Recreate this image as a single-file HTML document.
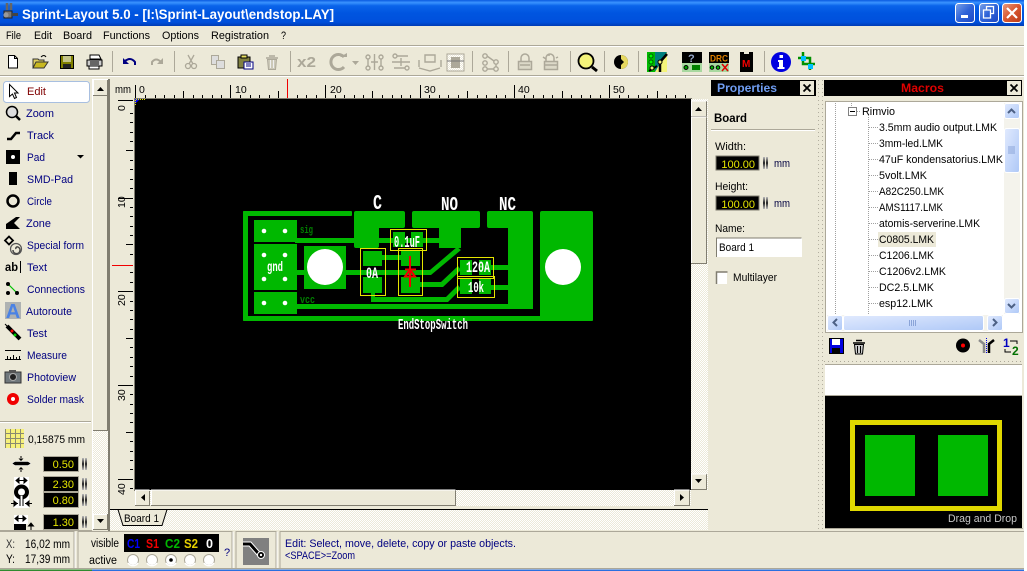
<!DOCTYPE html>
<html><head><meta charset="utf-8"><title>Sprint-Layout 5.0</title>
<style>
html,body{margin:0;padding:0;background:#fff;width:1027px;height:571px;overflow:hidden}
svg{display:block;font-family:"Liberation Sans",sans-serif;font-size:11px}
.n{fill:#000080}.k{fill:#000}.y{fill:#e6e600;text-anchor:end}
.g{fill:#aca899}.gs{stroke:#aca899;fill:none}
.s{fill:#fff;font-family:"Liberation Mono",monospace;font-weight:bold;font-size:12px}
.d{fill:#008000;font-family:"Liberation Mono",monospace;font-weight:bold;font-size:11px}
</style></head><body>
<svg width="1027" height="571" viewBox="0 0 1027 571">
<defs>
<pattern id="dith" width="2" height="2" patternUnits="userSpaceOnUse"><rect width="2" height="2" fill="#ece9d8"/><rect width="1" height="1" fill="#fff"/><rect x="1" y="1" width="1" height="1" fill="#fff"/></pattern>
<linearGradient id="tb" x1="0" y1="0" x2="0" y2="1"><stop offset="0" stop-color="#0a5ae0"/><stop offset=".1" stop-color="#3a93ff"/><stop offset=".22" stop-color="#0a64ea"/><stop offset=".5" stop-color="#0055e0"/><stop offset=".85" stop-color="#0050dc"/><stop offset="1" stop-color="#003cb4"/></linearGradient>
<linearGradient id="bb" x1="0" y1="0" x2="1" y2="1"><stop offset="0" stop-color="#7ba2e8"/><stop offset=".5" stop-color="#2f63d8"/><stop offset="1" stop-color="#1c47c4"/></linearGradient>
<linearGradient id="rb" x1="0" y1="0" x2="1" y2="1"><stop offset="0" stop-color="#e89b80"/><stop offset=".5" stop-color="#d8562f"/><stop offset="1" stop-color="#b83a18"/></linearGradient>
<linearGradient id="sb" x1="0" y1="0" x2="1" y2="1"><stop offset="0" stop-color="#e1eafe"/><stop offset="1" stop-color="#aec8f7"/></linearGradient>
<linearGradient id="spin" x1="0" y1="0" x2="0" y2="1"><stop offset="0" stop-color="#bbb"/><stop offset=".5" stop-color="#222"/><stop offset="1" stop-color="#bbb"/></linearGradient>
<g id="sp"><rect x="0" y="0" width="2" height="12" fill="url(#spin)"/><rect x="3" y="0" width="2" height="12" fill="url(#spin)"/></g>
<g id="radio"><circle r="5.5" fill="#fff" stroke="#aca899"/><path d="M-5 3A6 6 0 0 0 5 3" fill="none" stroke="#fff" stroke-width="1.500"/></g>
</defs>

<!-- window -->
<rect x="0" y="0" width="1024" height="571" fill="#ece9d8"/>
<rect x="0" y="0" width="1024" height="26" fill="url(#tb)"/>
<!-- app icon -->
<path d="M7 3v7M11 3v7" stroke="#666" stroke-width="2.500"/><rect x="4" y="11" width="8" height="7" fill="#777" stroke="#222"/><rect x="12" y="13" width="6" height="3" fill="#444"/><circle cx="6" cy="15" r="2.500" fill="#999"/>
<text x="22" y="19" fill="#fff" font-weight="bold" font-size="14" textLength="312" lengthAdjust="spacingAndGlyphs">Sprint-Layout 5.0 - [I:\Sprint-Layout\endstop.LAY]</text>
<!-- title buttons -->
<rect x="955.500" y="3.500" width="19" height="19" rx="3" fill="url(#bb)" stroke="#fff"/><rect x="961" y="15" width="7" height="3" fill="#fff"/>
<rect x="979.500" y="3.500" width="19" height="19" rx="3" fill="url(#bb)" stroke="#fff"/><path d="M986.500 9.500v-3h7v7h-3M983.500 10h7v8h-7z" fill="none" stroke="#fff" stroke-width="1.300"/>
<rect x="1002.500" y="3.500" width="19" height="19" rx="3" fill="url(#rb)" stroke="#fff"/><path d="M1007 8l10 10M1017 8l-10 10" stroke="#fff" stroke-width="2.200"/>

<!-- menu -->
<g class="k">
<text x="6" y="39" textLength="15" lengthAdjust="spacingAndGlyphs">File</text><text x="34" y="39" textLength="18" lengthAdjust="spacingAndGlyphs">Edit</text><text x="63" y="39" textLength="29" lengthAdjust="spacingAndGlyphs">Board</text><text x="103" y="39" textLength="47" lengthAdjust="spacingAndGlyphs">Functions</text><text x="162" y="39" textLength="37" lengthAdjust="spacingAndGlyphs">Options</text><text x="211" y="39" textLength="58" lengthAdjust="spacingAndGlyphs">Registration</text><text x="281" y="39" textLength="5" lengthAdjust="spacingAndGlyphs">?</text>
</g>
<path d="M0 45.500H1024" stroke="#aca899"/><path d="M0 46.500H1024" stroke="#fff"/>
<path d="M0 75.500H1024" stroke="#aca899"/><path d="M0 76.500H1024" stroke="#fff"/>

<!-- toolbar separators -->
<g stroke="#aca899"><path d="M112.500 51v21M174.500 51v21M290.500 51v21M472.500 51v21M508.500 51v21M570.500 51v21M604.500 51v21M638.500 51v21M764.500 51v21"/></g>
<!-- new -->
<path d="M8.500 55.500h6l3 3v9.500h-9z" fill="#fff" stroke="#000"/><path d="M14.500 55.500v3h3" fill="none" stroke="#000"/>
<!-- open -->
<path d="M33 68V59h5l1 1h5v2" fill="#e0d060" stroke="#333"/><path d="M33 68l3-6h12l-4 6z" fill="#c8b820" stroke="#333"/><path d="M41 57q3-3 5 0" fill="none" stroke="#000"/>
<!-- save -->
<rect x="60.500" y="55.500" width="13" height="13" fill="#808000" stroke="#000"/><rect x="63" y="56" width="8" height="6" fill="#c4c48a"/><rect x="63" y="64" width="8" height="4" fill="#222"/>
<!-- print -->
<path d="M90 55h9l2 4H90z" fill="#fff" stroke="#000"/><path d="M87 60h15v6H87z" fill="#ccc" stroke="#000"/><path d="M89 66h10v3H89z" fill="#fff" stroke="#000"/><path d="M90 62h9M90 64h9" stroke="#000"/>
<!-- undo/redo -->
<path d="M124 62q6-6 11 0v3" fill="none" stroke="#000080" stroke-width="2"/><path d="M123 58v6h6z" fill="#000080"/>
<path d="M161 62q-5-5-9 0v3" fill="none" stroke="#aca899" stroke-width="2"/><path d="M163 58v6h-6z" fill="#aca899"/>
<!-- cut -->
<g class="gs" stroke-width="1.300"><path d="M188 55l5 9M194 55l-5 9"/><circle cx="188" cy="66" r="2.500"/><circle cx="194" cy="66" r="2.500"/></g>
<!-- copy -->
<g fill="#ddd" stroke="#aca899"><path d="M211.500 55.500h7v9h-7z"/><path d="M216.500 60.500h8v8h-8z"/></g>
<!-- paste -->
<rect x="238" y="57" width="12" height="11" fill="#808040" stroke="#000"/><rect x="241" y="55" width="6" height="3" fill="#e8e060" stroke="#000"/><rect x="244" y="62" width="9" height="7" fill="#fff" stroke="#000080"/><path d="M246 64h5M246 66h5" stroke="#000080"/>
<!-- trash -->
<path d="M266 58h12M269 56h6" stroke="#aca899" stroke-width="1.500"/><path d="M267.500 59.500h9l-1 10h-7z" fill="#ccc9b8" stroke="#aca899"/><path d="M270.500 60v8M273.500 60v8" stroke="#eee"/>
<!-- x2 -->
<text x="297" y="67" class="g" font-weight="bold" font-size="15" textLength="19" lengthAdjust="spacingAndGlyphs">x2</text>
<!-- rotate -->
<path d="M344 57A7.500 7.500 0 1 0 344 67" fill="none" stroke="#aca899" stroke-width="3"/><path d="M340 57h7v-4z" fill="#aca899"/>
<path d="M352 61h7l-3.500 4z" fill="#aca899"/>
<!-- align etc -->
<g class="gs" stroke-width="1.400">
<circle cx="368" cy="57" r="2"/><circle cx="368" cy="68" r="2"/><circle cx="381" cy="57" r="2"/><circle cx="381" cy="68" r="2"/><path d="M368 59v7M381 59v7M371 62h7M374.500 54v16"/>
<circle cx="395" cy="56" r="2"/><circle cx="407" cy="68" r="2"/><path d="M397 56h11M392 62h18M394 68h11M401 58v8"/>
<path d="M425 55h10v7h-10zM419 60v7M441 60v7M419 68l11 3 10-3"/>
</g>
<rect x="447" y="54" width="17" height="17" fill="url(#dith)" stroke="#aca899"/><rect x="451" y="57" width="9" height="11" fill="#aca899"/><path d="M447 61h17" stroke="#777"/>
<g class="gs" stroke-width="1.400"><circle cx="485" cy="56" r="2.200"/><circle cx="485" cy="63" r="2.200"/><circle cx="485" cy="69" r="2.200"/><circle cx="496" cy="62" r="2.200"/><circle cx="496" cy="69" r="2.200"/><path d="M487 56l7 5M487 69h7M496 64v3"/></g>
<!-- locks -->
<g class="gs" stroke-width="1.500"><path d="M521 61v-3a4 4 0 0 1 8 0v3"/><rect x="518.500" y="61.500" width="13" height="8" fill="#dcd9c8"/><path d="M520 65h10"/><path d="M546 61v-3a4 4 0 0 1 8 0v3"/><rect x="544.500" y="61.500" width="13" height="8" fill="#dcd9c8"/><path d="M545 65h12M543 57l3 2M549 54v2M558 57l-2 1"/></g>
<!-- magnifier -->
<circle cx="586" cy="61" r="7.500" fill="#f4f47a" stroke="#000" stroke-width="1.800"/><path d="M592 67l5 4" stroke="#000" stroke-width="3"/>
<!-- half-moon -->
<circle cx="621" cy="62" r="7" fill="#000"/><path d="M621 55a7 7 0 0 1 0 14l0-4 3-3-3-3z" fill="#e6d860"/>
<!-- wizard -->
<rect x="647" y="52" width="20" height="20" fill="#007f7f"/><path d="M647 72V52h8v20z" fill="#00b800"/><path d="M667 52v20h-12z" fill="#f4f47a"/><circle cx="651" cy="56" r="2" fill="#0f0" stroke="#006000"/><circle cx="651" cy="62" r="2" fill="#0f0" stroke="#006000"/><path d="M667 54l-7 8v10" stroke="#000" stroke-width="2.500" fill="none"/><circle cx="660" cy="62" r="2" fill="#f4f47a" stroke="#000"/><path d="M649 71l8-5" stroke="#000" stroke-width="2"/><circle cx="652" cy="68" r="2" fill="#f4f47a" stroke="#000"/>
<!-- help -->
<rect x="682" y="52" width="20" height="11" fill="#000"/><rect x="682" y="63" width="20" height="9" fill="#a8d8a0"/><text x="688" y="62" fill="#9ac" font-weight="bold" font-size="11">?</text><circle cx="686" cy="67.500" r="2" fill="#00a000" stroke="#000"/><rect x="692" y="65" width="8" height="5" fill="#008000"/>
<!-- DRC -->
<rect x="709" y="52" width="20" height="11" fill="#000"/><rect x="709" y="63" width="20" height="9" fill="#a8d8a0"/><text x="710" y="61.500" fill="#e08000" font-weight="bold" font-size="9" textLength="18" lengthAdjust="spacingAndGlyphs">DRC</text><circle cx="712" cy="67.500" r="1.800" fill="#00c000" stroke="#000"/><circle cx="718" cy="67.500" r="1.800" fill="#00c000" stroke="#000"/><path d="M722 64l6 7M728 64l-6 7" stroke="#e00000" stroke-width="1.500"/>
<!-- M -->
<path d="M740 52h4v2h5v-2h4v20h-13z" fill="#000"/><text x="742" y="67" fill="#f00000" font-weight="bold" font-size="10">M</text>
<!-- info -->
<circle cx="781" cy="62" r="10" fill="#0000e0"/><rect x="779.500" y="55" width="3.500" height="3" fill="#fff"/><path d="M778 60h5v7h1.500v2h-7v-2h1.500v-5h-1z" fill="#fff"/>
<!-- crop -->
<path d="M803 52v12h12M798 58h12v12" fill="none" stroke="#009000" stroke-width="2.500"/><rect x="801" y="56" width="5" height="5" fill="#00c0ff"/><rect x="808" y="64" width="5" height="5" fill="#00c0ff"/>

<!-- left panel -->
<rect x="3.500" y="81.500" width="86" height="21" rx="3" fill="#fff" stroke="#a8bfe0"/>
<path d="M9.500 84.500v12l3-2.500 2 4.500 2-1-2-4.500h3.500z" fill="#fff" stroke="#000"/>
<text x="27" y="95" fill="#800000" textLength="19" lengthAdjust="spacingAndGlyphs">Edit</text>
<g class="n">
<text x="26" y="117" textLength="28" lengthAdjust="spacingAndGlyphs">Zoom</text><text x="27" y="139" textLength="27" lengthAdjust="spacingAndGlyphs">Track</text><text x="27" y="161" textLength="18" lengthAdjust="spacingAndGlyphs">Pad</text><text x="27" y="183" textLength="46" lengthAdjust="spacingAndGlyphs">SMD-Pad</text><text x="27" y="205" textLength="25" lengthAdjust="spacingAndGlyphs">Circle</text><text x="26" y="227" textLength="25" lengthAdjust="spacingAndGlyphs">Zone</text><text x="27" y="249" textLength="57" lengthAdjust="spacingAndGlyphs">Special form</text><text x="27" y="271" textLength="20" lengthAdjust="spacingAndGlyphs">Text</text><text x="27" y="293" textLength="58" lengthAdjust="spacingAndGlyphs">Connections</text><text x="26" y="315" textLength="46" lengthAdjust="spacingAndGlyphs">Autoroute</text><text x="27" y="337" textLength="20" lengthAdjust="spacingAndGlyphs">Test</text><text x="27" y="359" textLength="40" lengthAdjust="spacingAndGlyphs">Measure</text><text x="27" y="381" textLength="49" lengthAdjust="spacingAndGlyphs">Photoview</text><text x="27" y="403" textLength="57" lengthAdjust="spacingAndGlyphs">Solder mask</text>
</g>
<circle cx="12" cy="112" r="5.500" fill="#ddd" stroke="#000" stroke-width="1.500"/><path d="M16 116l4 4" stroke="#000" stroke-width="2.500"/>
<path d="M7 139h4l5-6h4" fill="none" stroke="#000" stroke-width="2.500"/>
<rect x="6" y="150" width="14" height="14" fill="#000"/><circle cx="13" cy="157" r="2" fill="#fff"/><path d="M77 155h7l-3.500 3.500z" fill="#000"/>
<rect x="9" y="172" width="8" height="13" fill="#000"/>
<circle cx="13" cy="201" r="5.500" fill="none" stroke="#000" stroke-width="2.500"/>
<path d="M6 229v-5l10-7h4l-6 6 6 6z" fill="#000"/>
<path d="M9 236.500l4 4-4 4-4-4z" fill="none" stroke="#000" stroke-width="1.800"/><path d="M16 249a1.500 1.500 0 0 1 2-2 3.500 3.500 0 1 1-5 3" fill="none" stroke="#444" stroke-width="1.500"/><circle cx="16" cy="249" r="5.500" fill="none" stroke="#555" stroke-width="1.200"/>
<text x="5" y="271" font-weight="bold" font-size="12" class="k" textLength="13" lengthAdjust="spacingAndGlyphs">ab</text><path d="M20.500 261v12" stroke="#000"/>
<path d="M8 284l9 9" stroke="#00c000" stroke-width="1.200"/><circle cx="8" cy="284" r="2" fill="#000"/><circle cx="8" cy="293" r="2" fill="#000"/><circle cx="17" cy="293" r="2" fill="#000"/>
<rect x="5" y="302" width="16" height="17" fill="#aeb2b2"/><text x="13" y="318" text-anchor="middle" font-weight="bold" font-size="20" fill="#4a82e4">A</text>
<path d="M7 326l13 13" stroke="#000" stroke-width="4"/><path d="M5 324l3 3" stroke="#000"/><circle cx="12" cy="331" r="1.500" fill="#f00"/><circle cx="15" cy="335" r="1.500" fill="#0c0"/>
<path d="M5 350.500h16" stroke="#000"/><path d="M5 359.500h16M7.500 356v3M10.500 357v2M13.500 355v4M16.500 357v2M19.500 356v3" stroke="#000" fill="none"/>
<rect x="5" y="372" width="16" height="11" fill="#70787c" stroke="#333"/><rect x="9" y="370" width="7" height="3" fill="#555"/><circle cx="13" cy="377" r="3.500" fill="#222" stroke="#aaa"/>
<circle cx="13" cy="399" r="6" fill="#f00000"/><circle cx="13" cy="399" r="2" fill="#fff"/>

<!-- left scrollbar -->
<rect x="92" y="79" width="17" height="451" fill="url(#dith)"/>
<path d="M92.500 79v451" stroke="#fff"/>
<rect x="93" y="80" width="15" height="15" fill="#ece9d8"/><path d="M93.500 95V79.500H108" fill="none" stroke="#fff"/><path d="M107.500 80v15.500H93" fill="none" stroke="#807d70"/>
<path d="M97 91h7l-3.500-4z" fill="#000"/>
<rect x="93" y="96" width="15" height="334" fill="#ece9d8"/><path d="M107.500 96v334.500H93" fill="none" stroke="#807d70"/>
<rect x="93" y="514" width="15" height="15" fill="#ece9d8"/><path d="M107.500 514v15.500H93" fill="none" stroke="#807d70"/><path d="M93.500 529V514.500H107" fill="none" stroke="#fff"/><path d="M97 519h7l-3.500 4z" fill="#000"/>
<path d="M109 79v452" stroke="#807d70" stroke-width="2"/>

<!-- grid etc -->
<path d="M0 421.500H91" stroke="#aca899"/><path d="M0 422.500H91" stroke="#fff"/>
<rect x="5" y="429" width="19" height="19" fill="#f6f07a"/>
<path d="M5.500 429v19M10.500 429v19M15.500 429v19M20.500 429v19M5 433.500h19M5 438.500h19M5 443.500h19" stroke="#8a8a70"/>
<text x="28" y="443" class="k" textLength="57" lengthAdjust="spacingAndGlyphs">0,15875 mm</text>
<g fill="#000" stroke="#aca899">
<rect x="43.500" y="456.500" width="35" height="15"/><rect x="43.500" y="476.500" width="35" height="15"/><rect x="43.500" y="492.500" width="35" height="15"/><rect x="43.500" y="514.500" width="35" height="15"/></g>
<g class="y" font-size="11"><text x="74" y="468">0.50</text><text x="74" y="488">2.30</text><text x="74" y="504">0.80</text><text x="74" y="526">1.30</text></g>
<use href="#sp" x="82" y="458"/><use href="#sp" x="82" y="478"/><use href="#sp" x="82" y="494"/><use href="#sp" x="82" y="516"/>
<!-- width icons -->
<path d="M12 463.500l3-2h13l3 2-3 2H15z" fill="#000" stroke="#fff" stroke-width=".5"/>
<path d="M18.500 458.500h5l-2.500 2.500zM18.500 469.500h5l-2.500-2.500z" fill="#000"/><path d="M21 456v2M21 470v2" stroke="#000"/>
<rect x="14" y="477" width="15" height="31" fill="#fff"/>
<path d="M16 480.500h11M16 480.500l3-2.500v5zM27 480.500l-3-2.500v5z" fill="#000" stroke="#000"/>
<circle cx="21.500" cy="492" r="5.500" fill="#fff" stroke="#000" stroke-width="4"/>
<path d="M20 497v9M23 497v9" stroke="#000"/><rect x="20.500" y="496" width="2" height="11" fill="#fff"/>
<path d="M11 503.500h7M14 501l3 2.500-3 2.500zM32 503.500h-7M29 501l-3 2.500 3 2.500z" fill="#000" stroke="#000"/>
<rect x="14" y="515" width="14" height="9" fill="#fff"/>
<path d="M15 518.500h11M15 518.500l3-2.500v5zM26 518.500l-3-2.500v5z" fill="#000" stroke="#000"/>
<rect x="14" y="524" width="12" height="6" fill="#000"/>
<path d="M31 530v-5M28.500 526l2.500-3 2.500 3z" fill="#000" stroke="#000"/>

<!-- rulers -->
<text x="115" y="93" class="k" textLength="16" lengthAdjust="spacingAndGlyphs">mm</text>
<path d="M118 100.500h15" stroke="#000"/>
<path d="M135.500 85v13" stroke="#000"/>
<path d="M145.500 95v3M155.500 95v3M164.500 95v3M174.500 95v3M183.500 91v7M193.500 95v3M202.500 95v3M212.500 95v3M221.500 95v3M230.500 85v13M240.500 95v3M250.500 95v3M259.500 95v3M269.500 95v3M278.500 91v7M297.500 95v3M306.500 95v3M316.500 95v3M325.500 85v13M335.500 95v3M344.500 95v3M354.500 95v3M363.500 95v3M372.500 91v7M382.500 95v3M392.500 95v3M401.500 95v3M410.500 95v3M420.500 85v13M429.500 95v3M439.500 95v3M448.500 95v3M458.500 95v3M467.500 91v7M477.500 95v3M486.500 95v3M496.500 95v3M505.500 95v3M514.500 85v13M524.500 95v3M533.500 95v3M543.500 95v3M552.500 95v3M562.500 91v7M571.500 95v3M581.500 95v3M590.500 95v3M600.500 95v3M609.500 85v13M619.500 95v3M628.500 95v3M638.500 95v3M647.500 95v3M657.500 91v7M666.500 95v3M675.500 95v3M685.500 95v3" stroke="#000"/>
<path d="M287.500 79v19" stroke="#f00000"/>
<g class="k" font-size="10.500"><text x="139" y="93">0</text><text x="235" y="93">10</text><text x="330" y="93">20</text><text x="424" y="93">30</text><text x="518" y="93">40</text><text x="613" y="93">50</text></g>
<path d="M130 113.500h3M130 122.500h3M130 132.500h3M130 141.500h3M126 150.500h7M130 160.500h3M130 169.500h3M130 179.500h3M130 188.500h3M118 198.500h15M130 207.500h3M130 216.500h3M130 226.500h3M130 235.500h3M126 244.500h7M130 254.500h3M130 272.500h3M130 282.500h3M118 291.500h15M130 301.500h3M130 310.500h3M130 319.500h3M130 329.500h3M126 338.500h7M130 347.500h3M130 357.500h3M130 366.500h3M130 376.500h3M118 385.500h15M130 394.500h3M130 404.500h3M130 413.500h3M130 422.500h3M126 432.500h7M130 441.500h3M130 451.500h3M130 460.500h3M130 469.500h3M118 479.500h15M130 488.500h3" stroke="#000"/>
<path d="M112 265.500h21" stroke="#f00000"/>
<g class="k" font-size="10.500">
<text transform="translate(125 111) rotate(-90)">0</text><text transform="translate(125 208) rotate(-90)">10</text><text transform="translate(125 306) rotate(-90)">20</text><text transform="translate(125 401) rotate(-90)">30</text><text transform="translate(125 495) rotate(-90)">40</text></g>

<!-- canvas -->
<rect x="134" y="98" width="558" height="393" fill="#807d70"/>
<rect x="135" y="99" width="556" height="391" fill="#000"/>
<path d="M135 99h5l-5 5z" fill="#0000ff"/><path d="M136 99.500h9M135.500 100v6" stroke="#e6e600" stroke-dasharray="1 1"/>

<!-- PCB -->
<g fill="#00b800">
<rect x="243" y="211" width="109" height="5" rx="1"/><rect x="243" y="211" width="5" height="110" rx="1"/><rect x="243" y="316" width="350" height="5" rx="1"/>
<rect x="254" y="220" width="43" height="22"/><rect x="254" y="244" width="43" height="46"/><rect x="254" y="292" width="43" height="22"/>
<rect x="304" y="246" width="42" height="43"/>
<rect x="295" y="238" width="144" height="5"/>
<rect x="297" y="270" width="133" height="5"/><rect x="297" y="304" width="236" height="5"/>
<path d="M358 211h45a2 2 0 0 1 2 2v13a2 2 0 0 1-2 2h-24v18a2 2 0 0 1-2 2h-21a2 2 0 0 1-2-2v-33a2 2 0 0 1 2-2z"/>
<path d="M414 211h64a2 2 0 0 1 2 2v13a2 2 0 0 1-2 2h-17v20h-22v-20h-25a2 2 0 0 1-2-2v-13a2 2 0 0 1 2-2z"/>
<path d="M489 211h42a2 2 0 0 1 2 2v96h-25v-81h-19a2 2 0 0 1-2-2v-13a2 2 0 0 1 2-2z"/>
<path d="M542 211h49a2 2 0 0 1 2 2v106a2 2 0 0 1-2 2h-51v-108a2 2 0 0 1 2-2z"/>
<rect x="363" y="251" width="19" height="15"/><rect x="363" y="277" width="19" height="16"/>
<rect x="401" y="251" width="19" height="15"/><rect x="401" y="277" width="19" height="16"/>
<rect x="393" y="232" width="12" height="15"/><rect x="411" y="232" width="12" height="15"/>
<rect x="460" y="260" width="12" height="15"/><rect x="479" y="260" width="12" height="15"/>
<rect x="460" y="279" width="12" height="15"/><rect x="479" y="279" width="12" height="15"/>
<rect x="382" y="255" width="19" height="5"/><rect x="491" y="265" width="17" height="5"/><rect x="491" y="285" width="17" height="5"/>
<rect x="371" y="293" width="4" height="9"/><rect x="371" y="297" width="75" height="5"/>
<rect x="420" y="282" width="21" height="5"/>
<path d="M428 270h2l27-23 4 3-30 25h-3zM439 282h2l17-16 3 4-18 17h-4zM444 297h2l12-12 3 4-13 13h-4z"/>
</g>
<circle cx="325" cy="267" r="18" fill="#fff"/><circle cx="563" cy="267" r="18" fill="#fff"/>
<g fill="#fff"><circle cx="264" cy="231" r="2.300"/><circle cx="285" cy="231" r="2.300"/><circle cx="264" cy="255" r="2.300"/><circle cx="285" cy="255" r="2.300"/><circle cx="264" cy="279" r="2.300"/><circle cx="285" cy="279" r="2.300"/><circle cx="264" cy="303" r="2.300"/><circle cx="285" cy="303" r="2.300"/></g>
<g fill="none" stroke="#e6e600">
<rect x="360.500" y="248.500" width="25" height="47"/><rect x="398.500" y="248.500" width="24" height="47"/>
<rect x="390.500" y="229.500" width="36" height="21"/><rect x="457.500" y="257.500" width="36" height="21"/><rect x="457.500" y="276.500" width="37" height="21"/></g>
<g stroke="#f00000" fill="none" stroke-width="2"><path d="M410 256v31M405 269.500h11M410 269.500l-5 7h10z"/></g>
<g class="s">
<text x="373" y="209" textLength="9" lengthAdjust="spacingAndGlyphs" font-size="21" style="font-size:21px">C</text>
<text x="441" y="210" textLength="17" lengthAdjust="spacingAndGlyphs" style="font-size:19px">NO</text>
<text x="499" y="210" textLength="17" lengthAdjust="spacingAndGlyphs" style="font-size:19px">NC</text>
<text x="398" y="329" textLength="70" lengthAdjust="spacingAndGlyphs" style="font-size:15px">EndStopSwitch</text>
<text x="394" y="247" textLength="26" lengthAdjust="spacingAndGlyphs" style="font-size:17px">0.1uF</text>
<text x="466" y="272" textLength="24" lengthAdjust="spacingAndGlyphs" style="font-size:16px">120A</text>
<text x="468" y="292" textLength="16" lengthAdjust="spacingAndGlyphs" style="font-size:15px">10k</text>
<text x="366" y="278" textLength="12" lengthAdjust="spacingAndGlyphs" style="font-size:16px">0A</text>
<text x="267" y="271" textLength="16" lengthAdjust="spacingAndGlyphs" style="font-size:14px">gnd</text>
</g>
<g class="d"><text x="300" y="233" textLength="13" lengthAdjust="spacingAndGlyphs">sig</text><text x="300" y="303" textLength="15" lengthAdjust="spacingAndGlyphs">vcc</text></g>

<!-- canvas scrollbars -->
<rect x="135" y="490" width="556" height="16" fill="url(#dith)"/>
<rect x="135" y="490" width="15" height="15" fill="#ece9d8"/><path d="M149.500 491v14.500H135" fill="none" stroke="#807d70"/><path d="M135.500 505v-15h14" fill="none" stroke="#fff"/>
<path d="M145 494v7l-4-3.500z" fill="#000"/>
<rect x="151" y="490" width="305" height="15" fill="#ece9d8"/><path d="M455.500 490v15.500H151" fill="none" stroke="#807d70"/><path d="M151.500 505v-15h304" fill="none" stroke="#fff"/>
<rect x="674" y="490" width="16" height="15" fill="#ece9d8"/><path d="M689.500 490v15.500H674" fill="none" stroke="#807d70"/><path d="M674.500 505v-15h15" fill="none" stroke="#fff"/><path d="M680 494v7l4-3.500z" fill="#000"/>
<rect x="691" y="99" width="17" height="392" fill="url(#dith)"/>
<rect x="691" y="101" width="16" height="15" fill="#ece9d8"/><path d="M706.500 101v15.500H691" fill="none" stroke="#807d70"/><path d="M691.500 116v-15h15" fill="none" stroke="#fff"/><path d="M695 111h7l-3.500-4z" fill="#000"/>
<rect x="691" y="117" width="16" height="146" fill="#ece9d8"/><path d="M706.500 117v146.500H691" fill="none" stroke="#807d70"/><path d="M691.500 263v-146h15" fill="none" stroke="#fff"/>
<rect x="691" y="474" width="16" height="15" fill="#ece9d8"/><path d="M706.500 474v15.500H691" fill="none" stroke="#807d70"/><path d="M691.500 489v-15h15" fill="none" stroke="#fff"/><path d="M695 479h7l-3.500 4z" fill="#000"/>
<rect x="691" y="490" width="17" height="16" fill="#ece9d8"/>
<!-- tabs -->
<rect x="110" y="510" width="598" height="20" fill="url(#dith)"/>
<path d="M110 509.500H708" stroke="#000"/>
<path d="M118 510l5 15.500h39l5-15.500z" fill="#ece9d8"/>
<path d="M118 509.500l5 16h39l5-16" fill="none" stroke="#000"/>
<text x="124" y="522" class="k" textLength="35" lengthAdjust="spacingAndGlyphs">Board 1</text>

<!-- properties -->
<rect x="711" y="80" width="105" height="16" fill="#000"/>
<text x="717" y="92" fill="#6f9cf0" font-weight="bold" font-size="12" textLength="60" lengthAdjust="spacingAndGlyphs">Properties</text>
<rect x="800" y="81" width="14" height="14" fill="#ece9d8"/><path d="M803.500 84.500l7 7M810.500 84.500l-7 7" stroke="#000" stroke-width="1.800"/>
<text x="714" y="122" class="k" font-weight="bold" font-size="11.500" textLength="33" lengthAdjust="spacingAndGlyphs">Board</text>
<path d="M711 129.500h104" stroke="#aca899"/><path d="M711 130.500h104" stroke="#fff"/>
<text x="715" y="150" class="k" textLength="31" lengthAdjust="spacingAndGlyphs">Width:</text>
<rect x="716" y="156" width="43" height="14" fill="#000" stroke="#807d70"/><text x="755" y="168" class="y">100.00</text><use href="#sp" x="763" y="157"/><text x="774" y="207" fill="#000040" textLength="16" lengthAdjust="spacingAndGlyphs" transform="translate(0 -40)">mm</text>
<text x="715" y="190" class="k" textLength="33" lengthAdjust="spacingAndGlyphs">Height:</text>
<rect x="716" y="196" width="43" height="14" fill="#000" stroke="#807d70"/><text x="755" y="208" class="y">100.00</text><use href="#sp" x="763" y="197"/><text x="774" y="207" fill="#000040" textLength="16" lengthAdjust="spacingAndGlyphs">mm</text>
<text x="715" y="232" class="k" textLength="30" lengthAdjust="spacingAndGlyphs">Name:</text>
<rect x="716" y="238" width="86" height="19" fill="#fff"/><path d="M716.500 257v-19h85" fill="none" stroke="#807d70"/>
<text x="719" y="251" class="k" textLength="35" lengthAdjust="spacingAndGlyphs">Board 1</text>
<rect x="716" y="272" width="11" height="12" fill="#fff"/><path d="M716.500 284v-12h11" fill="none" stroke="#807d70" stroke-width="1.500"/>
<text x="733" y="281" class="k" textLength="44" lengthAdjust="spacingAndGlyphs">Multilayer</text>

<!-- grip dots -->
<path d="M818.500 80v449M822.500 80v449" stroke="#aca899" stroke-dasharray="1 3" opacity=".9"/>

<!-- macros -->
<rect x="824" y="80" width="198" height="16" fill="#000"/>
<text x="901" y="92" fill="#e00000" font-weight="bold" font-size="12" textLength="43" lengthAdjust="spacingAndGlyphs">Macros</text>
<rect x="1007" y="81" width="14" height="14" fill="#ece9d8"/><path d="M1010.500 84.500l7 7M1017.500 84.500l-7 7" stroke="#000" stroke-width="1.800"/>
<rect x="825.500" y="101.500" width="197" height="231" fill="#fff" stroke="#aca899" stroke-width="1"/>
<path d="M835.500 103v212M851.500 103v4M868.500 115v200" stroke="#a0a0a0" stroke-dasharray="1 1"/>
<path d="M869 127.500h9M869 143.500h9M869 159.500h9M869 175.500h9M869 191.500h9M869 207.500h9M869 223.500h9M869 239.500h9M869 255.500h9M869 271.500h9M869 287.500h9M869 303.500h9M857 111.500h4" stroke="#a0a0a0" stroke-dasharray="1 1"/>
<rect x="848.500" y="107.500" width="8" height="8" fill="#fff" stroke="#808080"/><path d="M850 111.500h5" stroke="#000"/>
<rect x="878" y="232" width="58" height="15" fill="#ece9d8"/>
<g class="k">
<text x="862" y="115" textLength="33" lengthAdjust="spacingAndGlyphs">Rimvio</text>
<text x="879" y="131" textLength="118" lengthAdjust="spacingAndGlyphs">3.5mm audio output.LMK</text>
<text x="879" y="147" textLength="64" lengthAdjust="spacingAndGlyphs">3mm-led.LMK</text>
<text x="879" y="163" textLength="124" lengthAdjust="spacingAndGlyphs">47uF kondensatorius.LMK</text>
<text x="879" y="179" textLength="48" lengthAdjust="spacingAndGlyphs">5volt.LMK</text>
<text x="879" y="195" textLength="65" lengthAdjust="spacingAndGlyphs">A82C250.LMK</text>
<text x="879" y="211" textLength="64" lengthAdjust="spacingAndGlyphs">AMS1117.LMK</text>
<text x="879" y="227" textLength="101" lengthAdjust="spacingAndGlyphs">atomis-serverine.LMK</text>
<text x="879" y="243" textLength="55" lengthAdjust="spacingAndGlyphs">C0805.LMK</text>
<text x="879" y="259" textLength="55" lengthAdjust="spacingAndGlyphs">C1206.LMK</text>
<text x="879" y="275" textLength="67" lengthAdjust="spacingAndGlyphs">C1206v2.LMK</text>
<text x="879" y="291" textLength="55" lengthAdjust="spacingAndGlyphs">DC2.5.LMK</text>
<text x="879" y="307" textLength="54" lengthAdjust="spacingAndGlyphs">esp12.LMK</text>
</g>
<!-- XP scrollbars -->
<rect x="1004" y="103" width="16" height="211" fill="#f4f3ec"/>
<rect x="1004.500" y="103.500" width="15" height="15" rx="2" fill="url(#sb)" stroke="#fff"/><path d="M1008 113l3.500-3.500 3.500 3.500" fill="none" stroke="#4d6185" stroke-width="2"/>
<rect x="1004.500" y="128.500" width="15" height="44" rx="2" fill="url(#sb)" stroke="#fff"/><path d="M1008 147h7M1008 149h7M1008 151h7M1008 153h7" stroke="#8aa4d8"/>
<rect x="1004.500" y="298.500" width="15" height="15" rx="2" fill="url(#sb)" stroke="#fff"/><path d="M1008 304l3.500 3.500 3.500-3.500" fill="none" stroke="#4d6185" stroke-width="2"/>
<rect x="827" y="315" width="176" height="16" fill="#f4f3ec"/>
<rect x="827.500" y="315.500" width="15" height="15" rx="2" fill="url(#sb)" stroke="#fff"/><path d="M837 319l-3.500 3.500 3.500 3.500" fill="none" stroke="#4d6185" stroke-width="2"/>
<rect x="843.500" y="315.500" width="140" height="15" rx="2" fill="url(#sb)" stroke="#fff"/><path d="M909.500 320v6M911.500 320v6M913.500 320v6M915.500 320v6" stroke="#8aa4d8"/>
<rect x="987.500" y="315.500" width="15" height="15" rx="2" fill="url(#sb)" stroke="#fff"/><path d="M993 319l3.500 3.500-3.500 3.500" fill="none" stroke="#4d6185" stroke-width="2"/>
<!-- macro tools -->
<rect x="829.500" y="338.500" width="14" height="15" fill="#0000e0" stroke="#000"/><rect x="832" y="339" width="8" height="6" fill="#fff"/><rect x="832" y="348" width="8" height="5" fill="#000"/>
<path d="M853 343h12M856 340.500h6" stroke="#000" stroke-width="1.500"/><path d="M854.500 344.500h9l-1 9.500h-7z" fill="#ccc" stroke="#000"/><path d="M857.500 346v7M860.500 346v7" stroke="#000"/>
<circle cx="963" cy="345.500" r="7" fill="#000"/><circle cx="963" cy="345.500" r="2" fill="#f00"/>
<path d="M979 340l5 4v9" fill="none" stroke="#8a8a8a" stroke-width="2.500"/><path d="M994 340l-5 4v9" fill="none" stroke="#000" stroke-width="2.500"/><path d="M986.500 338v16" stroke="#0000e0" stroke-dasharray="1 1"/>
<text x="1003" y="347" fill="#0000c0" font-weight="bold" font-size="12">1</text><text x="1012" y="355" fill="#007000" font-weight="bold" font-size="12">2</text><path d="M1010 341h7v3M1005 349v3h6" stroke="#000" fill="none"/>
<path d="M824 361.500h198" stroke="#aca899" stroke-dasharray="1 3"/>
<rect x="825" y="364" width="197" height="32" fill="#fff"/><path d="M825 364.500h197" stroke="#aca899"/>
<rect x="825" y="396" width="197" height="132" fill="#000"/>
<path d="M825 395.500h197" stroke="#aca899"/>
<path d="M825 528.500h198" stroke="#aca899"/>
<rect x="852.500" y="422.500" width="147" height="86" fill="none" stroke="#e0d800" stroke-width="5"/>
<rect x="865" y="435" width="50" height="61" fill="#00b800"/><rect x="938" y="435" width="50" height="61" fill="#00b800"/>
<text x="948" y="522" fill="#c8c8c8" textLength="69" lengthAdjust="spacingAndGlyphs">Drag and Drop</text>

<!-- status bar -->
<path d="M0 530.500H92" stroke="#aca899"/>
<g fill="none" stroke="#aca899">
<path d="M0 531.500H74V568M78 568V531.500H232V568M236 568V531.500H276V568M280 568V531.500H1024"/></g>
<g fill="none" stroke="#fff"><path d="M75 532v36M233 532v36M277 532v36"/></g>
<path d="M0 568.500H1024" stroke="#aca899"/>
<g class="k" font-size="11.500">
<text x="6" y="548" fill="#333" textLength="9" lengthAdjust="spacingAndGlyphs">X:</text><text x="25" y="548" textLength="45" lengthAdjust="spacingAndGlyphs">16,02 mm</text>
<text x="6" y="563" textLength="9" lengthAdjust="spacingAndGlyphs">Y:</text><text x="25" y="563" textLength="45" lengthAdjust="spacingAndGlyphs">17,39 mm</text>
<text x="91" y="547" textLength="28" lengthAdjust="spacingAndGlyphs">visible</text><text x="89" y="564" textLength="28" lengthAdjust="spacingAndGlyphs">active</text></g>
<rect x="124" y="534" width="95" height="18" fill="#000"/>
<g font-size="13" font-weight="bold"><text x="127" y="548" fill="#0000ff" textLength="13" lengthAdjust="spacingAndGlyphs">C1</text><text x="146" y="548" fill="#f00000" textLength="13" lengthAdjust="spacingAndGlyphs">S1</text><text x="165" y="548" fill="#00b800" textLength="15" lengthAdjust="spacingAndGlyphs">C2</text><text x="184" y="548" fill="#e6d000" textLength="14" lengthAdjust="spacingAndGlyphs">S2</text><text x="206" y="548" fill="#fff" textLength="7" lengthAdjust="spacingAndGlyphs">0</text></g>
<text x="224" y="556" fill="#000080" font-size="11">?</text>
<use href="#radio" x="133" y="560"/><use href="#radio" x="152" y="560"/><use href="#radio" x="171" y="560"/><use href="#radio" x="190" y="560"/><use href="#radio" x="209" y="560"/>
<circle cx="171" cy="560" r="1.800" fill="#000"/>
<rect x="243" y="538" width="26" height="27" fill="#808080"/>
<path d="M243 544h7l8 9 3 3" fill="none" stroke="#fff" stroke-width="5"/><path d="M243 544h7l8 9" fill="none" stroke="#000" stroke-width="3"/><circle cx="261" cy="555" r="3.500" fill="#000" stroke="#fff"/><circle cx="261" cy="555" r="1.200" fill="#fff"/>
<text x="285" y="547" class="n" textLength="231" lengthAdjust="spacingAndGlyphs">Edit: Select, move, delete, copy or paste objects.</text>
<text x="285" y="559" class="n" textLength="70" lengthAdjust="spacingAndGlyphs">&lt;SPACE&gt;=Zoom</text>
<rect x="0" y="569.500" width="92" height="1.500" fill="#2f8a2f"/><rect x="92" y="569.500" width="932" height="1.500" fill="#2a6fe0"/>
</svg>
</body></html>
